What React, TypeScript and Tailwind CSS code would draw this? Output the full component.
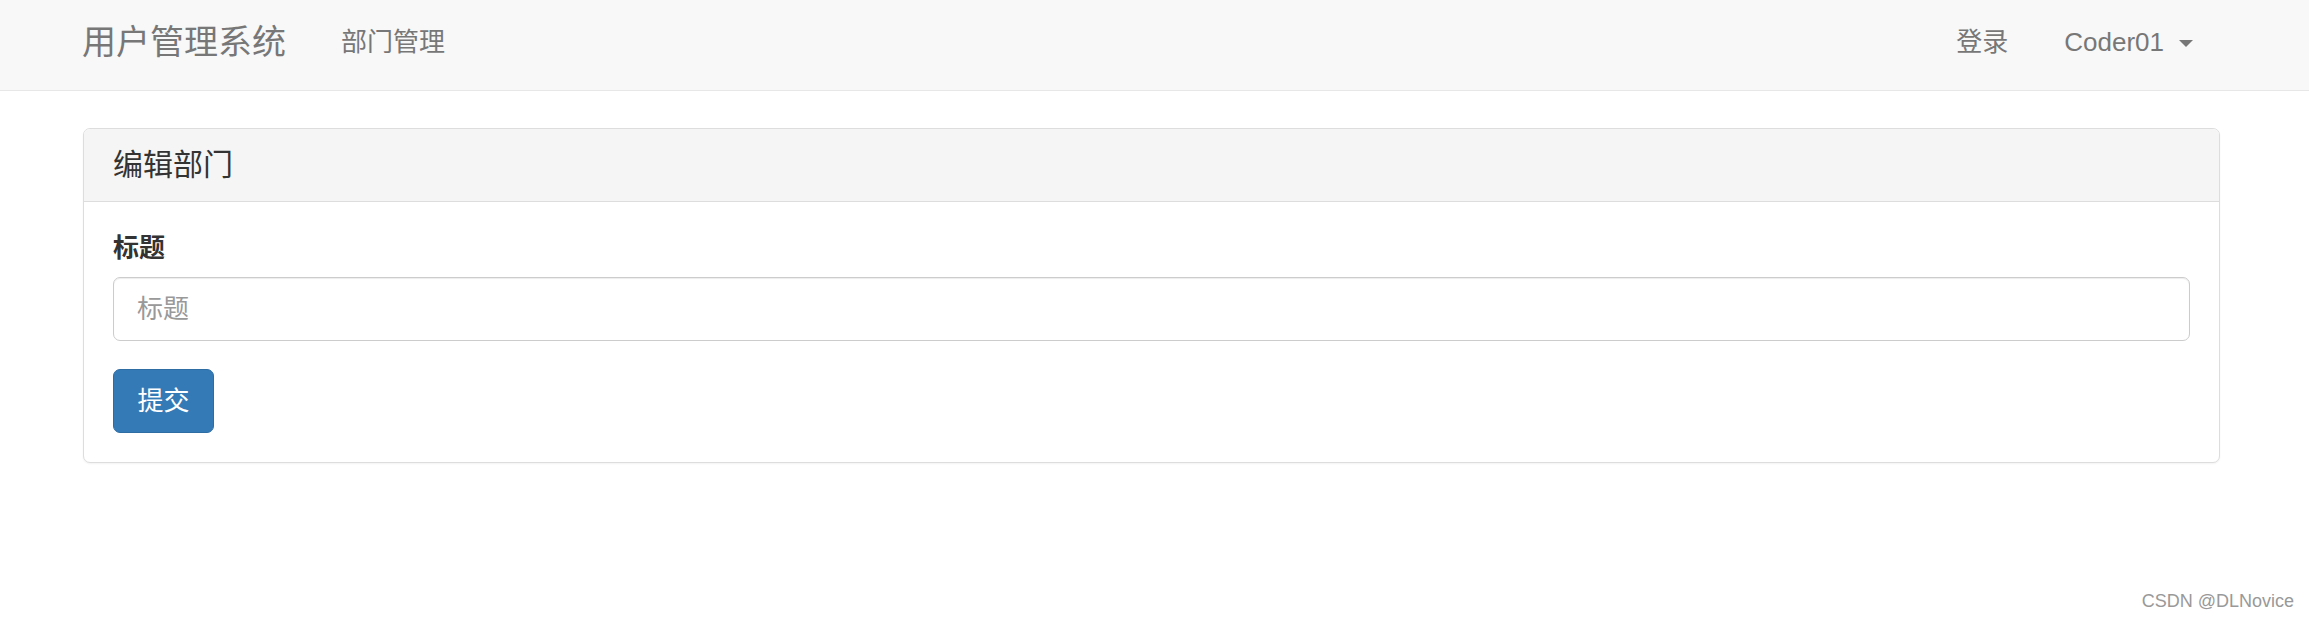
export default function App() {
  const font = { fontFamily: '"Liberation Sans", "Noto Sans CJK SC", Arial, sans-serif' };

  return (
    <div className="relative min-h-[620px] bg-white text-[#333]" style={font}>
      {/* Navbar */}
      <nav className="flex h-[91px] items-center border-b border-[#e7e7e7] bg-[#f8f8f8] pb-[6px]">
        <a className="ml-[82px] text-[34px] leading-none text-[#777]">用户管理系统</a>
        <a className="ml-[55px] text-[26px] leading-none text-[#777]">部门管理</a>
        <div className="ml-auto mr-[116px] flex items-center">
          <a className="text-[26px] leading-none text-[#777]">登录</a>
          <a className="ml-[56px] flex items-center text-[26px] leading-none text-[#777]">
            Coder01
            <span className="ml-[15px] mt-[2px] h-0 w-0 border-x-[7px] border-t-[7px] border-x-transparent border-t-[#777]" />
          </a>
        </div>
      </nav>

      {/* Panel */}
      <div className="ml-[83px] mt-[37px] w-[2137px] rounded-[7px] border border-[#ddd] bg-white shadow-[0_1px_2px_rgba(0,0,0,0.05)]">
        <div className="flex h-[73px] items-center rounded-t-[6px] border-b border-[#ddd] bg-[#f5f5f5] px-[29px]">
          <h3 className="text-[30px] leading-none text-[#333]">编辑部门</h3>
        </div>
        <div className="px-[29px] pb-[29px] pt-[28px]">
          <label className="block h-[37px] text-[26px] font-bold leading-[37px] text-[#333]">标题</label>
          <input
            className="mt-[10px] block h-[64px] w-full rounded-[7px] border border-[#ccc] px-[23px] text-[26px] text-[#555] shadow-[inset_0_1px_1px_rgba(0,0,0,0.075)] outline-none placeholder:text-[#999]"
            placeholder="标题"
          />
          <button className="mt-[28px] flex h-[64px] w-[101px] items-center justify-center rounded-[7px] border border-[#2e6da4] bg-[#337ab7] text-[26px] leading-none text-white">
            提交
          </button>
        </div>
      </div>

      {/* Watermark */}
      <div className="absolute bottom-[5px] right-[15px] text-[18px] text-[#999]">CSDN @DLNovice</div>
    </div>
  );
}
